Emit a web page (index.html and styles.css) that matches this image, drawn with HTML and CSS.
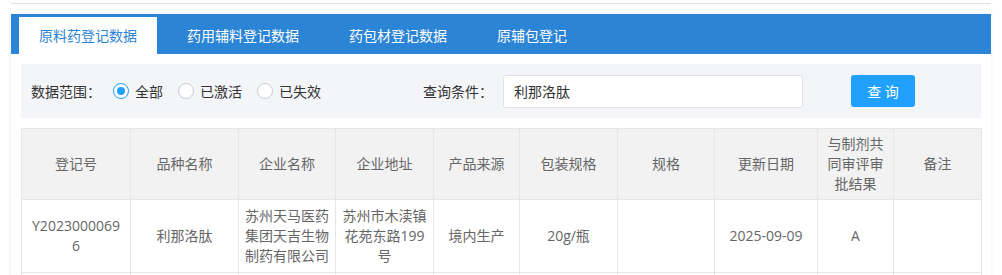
FILE: index.html
```html
<!DOCTYPE html>
<html lang="zh-CN">
<head>
    <meta charset="UTF-8">
    <title>原辅包登记数据</title>
    <link rel="stylesheet" href="styles.css">
</head>
<body>
    <div class="topline"></div>
    <div class="card">
        <div class="tabs">
            <div class="tab active">原料药登记数据</div>
            <div class="tab">药用辅料登记数据</div>
            <div class="tab">药包材登记数据</div>
            <div class="tab">原辅包登记</div>
        </div>
        <div class="content">
            <div class="filter">
                <div class="range">
                    <span class="label">数据范围：</span>
                    <label class="radio checked"><span class="dot"></span>全部</label>
                    <label class="radio"><span class="dot"></span>已激活</label>
                    <label class="radio"><span class="dot"></span>已失效</label>
                </div>
                <span class="label">查询条件：</span>
                <div class="input">利那洛肽</div>
                <button class="btn">查 询</button>
            </div>
            <table class="grid">
                <colgroup>
                    <col style="width:109px"><col style="width:108px"><col style="width:97px"><col style="width:98px"><col style="width:86px">
                    <col style="width:98px"><col style="width:97px"><col style="width:103px"><col style="width:76px"><col style="width:88px">
                </colgroup>
                <thead>
                    <tr>
                        <th>登记号</th>
                        <th>品种名称</th>
                        <th>企业名称</th>
                        <th>企业地址</th>
                        <th>产品来源</th>
                        <th>包装规格</th>
                        <th>规格</th>
                        <th>更新日期</th>
                        <th>与制剂共同审评审批结果</th>
                        <th>备注</th>
                    </tr>
                </thead>
                <tbody>
                    <tr>
                        <td class="code">Y20230000696</td>
                        <td>利那洛肽</td>
                        <td>苏州天马医药集团天吉生物制药有限公司</td>
                        <td>苏州市木渎镇花苑东路199号</td>
                        <td>境内生产</td>
                        <td>20g/瓶</td>
                        <td></td>
                        <td>2025-09-09</td>
                        <td>A</td>
                        <td></td>
                    </tr>
                    <tr>
                        <td></td><td></td><td></td><td></td><td></td><td></td><td></td><td></td><td></td><td></td>
                    </tr>
                </tbody>
            </table>
        </div>
    </div>
</body>
</html>
```

FILE: styles.css
```css
body {
    margin: 0;
    padding: 0 11px;
    background: #fff;
    font-family: "Open Sans", "Noto Sans CJK SC", sans-serif;
    font-size: 14px;
    color: #333;
}

.topline {
    height: 3px;
    border-bottom: 1px solid #e3e3e3;
    margin-bottom: 10px;
}

.card {
    background: #fff;
    box-shadow: 0 0 4px rgba(0, 0, 0, 0.08);
}

.tabs {
    display: flex;
    height: 40px;
    padding: 3px 0 0 8px;
    box-sizing: border-box;
    background: #2b84d5;
}

.tab {
    padding: 0 20px;
    margin-right: 10px;
    height: 37px;
    line-height: 37px;
    color: #fff;
}

.tab.active {
    background: #fff;
    color: #2b84d5;
}

.content {
    padding: 10px;
}

.filter {
    display: flex;
    align-items: center;
    height: 54px;
    padding-left: 10px;
    background: #f4f5f8;
}

.range {
    display: flex;
    align-items: center;
    width: 392px;
}

.label {
    white-space: nowrap;
}

.range .label {
    margin-right: 12px;
}

.radio {
    display: flex;
    align-items: center;
    margin-right: 15px;
}

.dot {
    width: 16px;
    height: 16px;
    box-sizing: border-box;
    border: 1px solid #c9ccd2;
    border-radius: 50%;
    background: #fff;
    margin-right: 6px;
    display: flex;
    align-items: center;
    justify-content: center;
}

.radio.checked .dot {
    border-color: #20a0ff;
}

.radio.checked .dot::after {
    content: "";
    width: 8px;
    height: 8px;
    border-radius: 50%;
    background: #20a0ff;
}

.input {
    width: 300px;
    height: 33px;
    box-sizing: border-box;
    margin-left: 10px;
    padding: 0 10px;
    line-height: 31px;
    background: #fff;
    border: 1px solid #dfe1e6;
    border-radius: 3px;
}

.btn {
    margin-left: 48px;
    width: 64px;
    height: 32px;
    border: none;
    border-radius: 3px;
    background: #20a0ff;
    color: #fff;
    font-family: inherit;
    font-size: 14px;
}

.grid {
    width: 960px;
    margin-top: 10px;
    border-collapse: collapse;
    table-layout: fixed;
    color: #666;
}

.grid th,
.grid td {
    border: 1px solid #e6e6e6;
    padding: 0 5px;
    text-align: center;
    line-height: 20px;
    font-weight: normal;
}

.grid th {
    height: 70px;
    background: #f2f2f2;
}

.grid td {
    height: 72px;
}

.grid td.code {
    padding: 0 9px;
    word-break: break-all;
}
```
